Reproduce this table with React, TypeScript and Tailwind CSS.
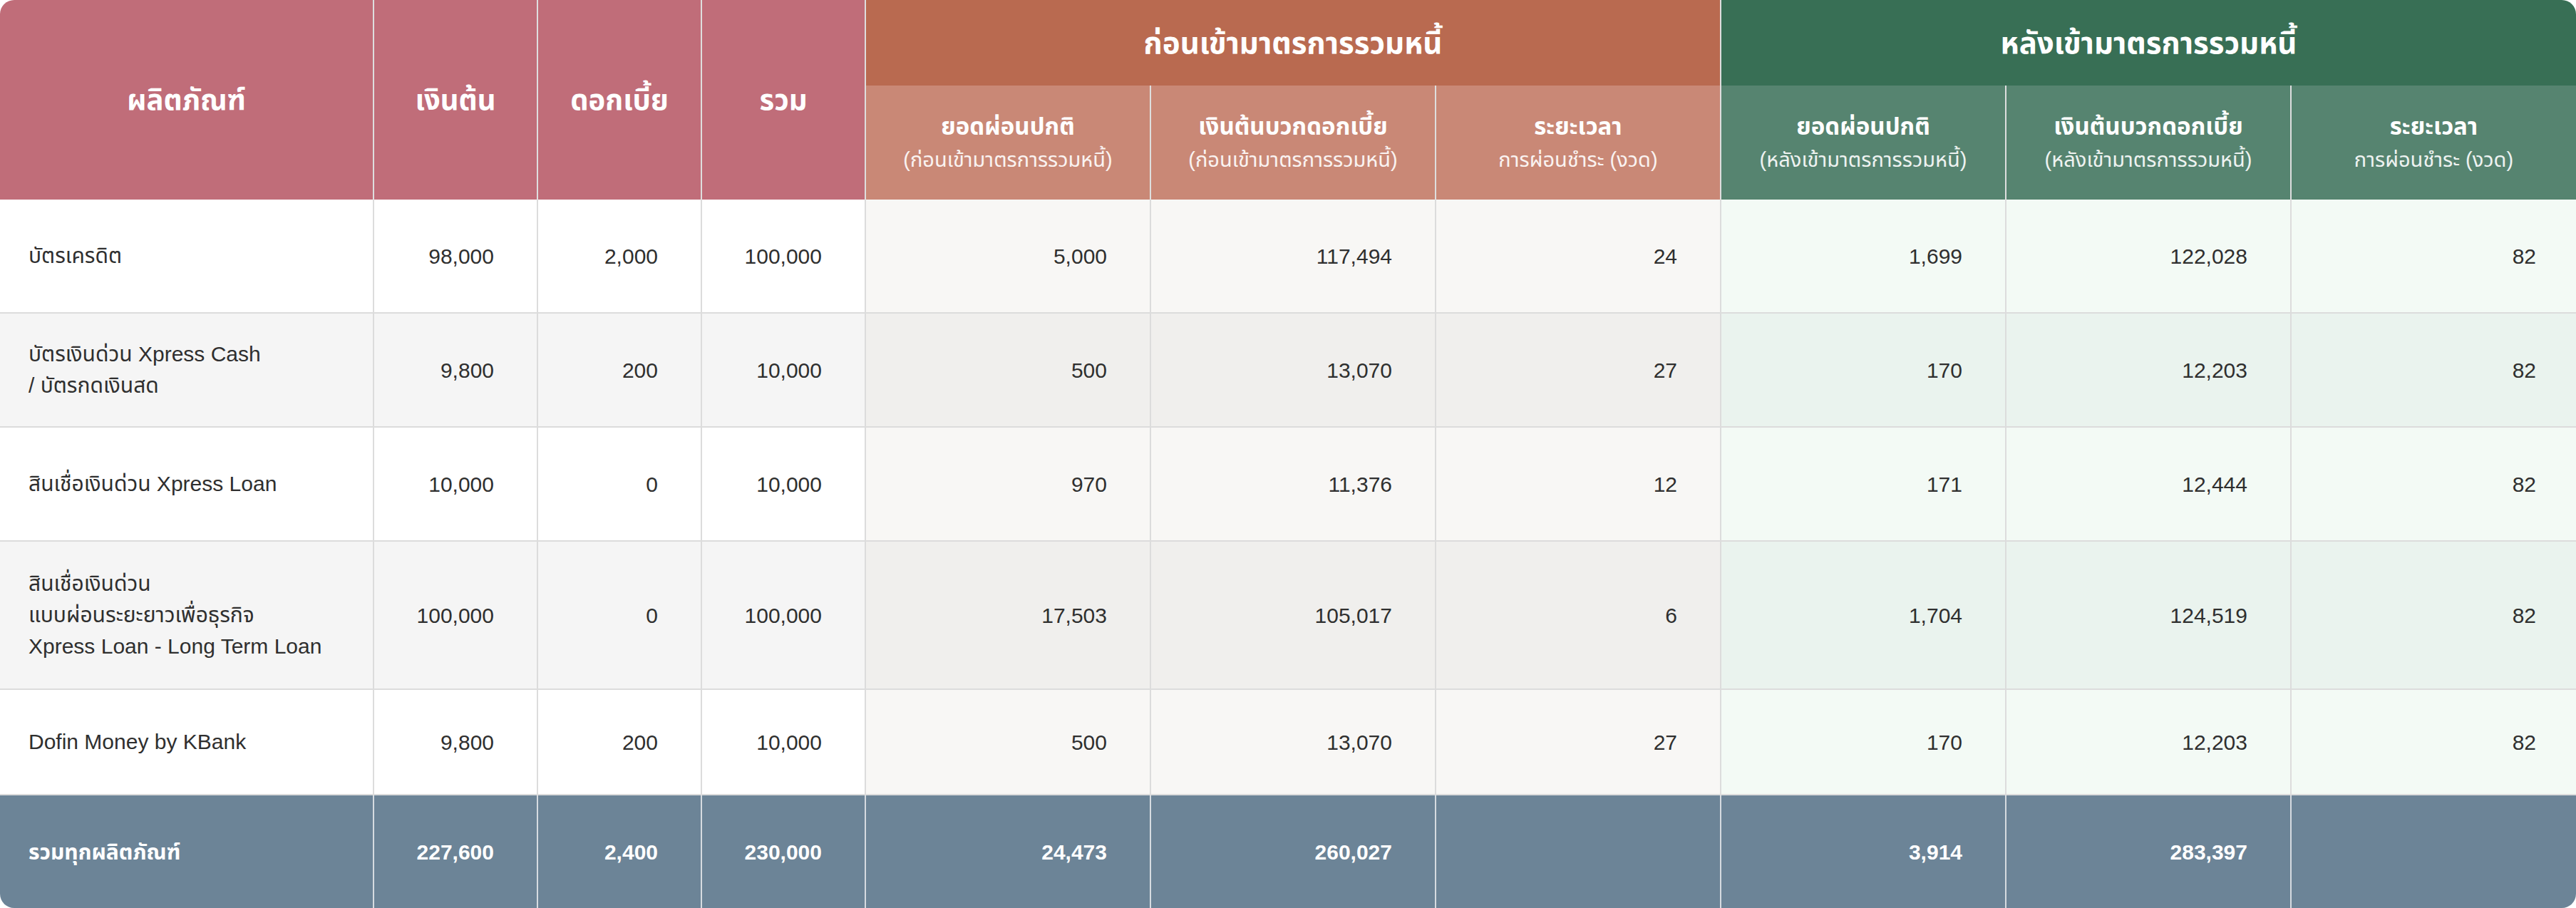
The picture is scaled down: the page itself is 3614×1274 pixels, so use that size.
import React from "react";

type Row = {
  name: string[];
  principal: string;
  interest: string;
  total: string;
  before: string[];
  after: string[];
  height: string;
};

const ROWS: Row[] = [
  {
    name: ["บัตรเครดิต"],
    principal: "98,000",
    interest: "2,000",
    total: "100,000",
    before: ["5,000", "117,494", "24"],
    after: ["1,699", "122,028", "82"],
    height: "h-[160px]",
  },
  {
    name: ["บัตรเงินด่วน Xpress Cash", "/ บัตรกดเงินสด"],
    principal: "9,800",
    interest: "200",
    total: "10,000",
    before: ["500", "13,070", "27"],
    after: ["170", "12,203", "82"],
    height: "h-[160px]",
  },
  {
    name: ["สินเชื่อเงินด่วน Xpress Loan"],
    principal: "10,000",
    interest: "0",
    total: "10,000",
    before: ["970", "11,376", "12"],
    after: ["171", "12,444", "82"],
    height: "h-[160px]",
  },
  {
    name: ["สินเชื่อเงินด่วน", "แบบผ่อนระยะยาวเพื่อธุรกิจ", "Xpress Loan - Long Term Loan"],
    principal: "100,000",
    interest: "0",
    total: "100,000",
    before: ["17,503", "105,017", "6"],
    after: ["1,704", "124,519", "82"],
    height: "h-[208px]",
  },
  {
    name: ["Dofin Money by KBank"],
    principal: "9,800",
    interest: "200",
    total: "10,000",
    before: ["500", "13,070", "27"],
    after: ["170", "12,203", "82"],
    height: "h-[148px]",
  },
];

const FONT = "font-['Liberation_Sans','Noto_Sans_Thai','Noto_Sans',sans-serif]";

// เซลล์ตัวเลขชิดขวา
const NumCell = ({ value, className }: { value: string; className: string }) => (
  <div className={`flex items-center justify-end pr-[60px] ${className}`}>{value}</div>
);

function SubHeader({ title, line2, className }: { title: string; line2: string; className: string }) {
  return (
    <div className={`flex flex-col items-center justify-center text-white ${className}`}>
      <div className="text-[33px] font-bold leading-[48px]">{title}</div>
      <div className="text-[29px] leading-[44px] text-white/90">{line2}</div>
    </div>
  );
}

export default function App() {
  return (
    <div className={`w-[3614px] h-[1274px] bg-white ${FONT}`}>
      <div className="w-full h-full rounded-[20px] overflow-hidden flex flex-col">
        {/* ── header ── */}
        <div className="flex h-[280px]">
          <div className="w-[525px] border-r-2 border-[#dedede] bg-[#c06d79] flex items-center justify-center text-white text-[40px] font-bold">
            ผลิตภัณฑ์
          </div>
          <div className="w-[230px] border-r-2 border-[#dedede] bg-[#c06d79] flex items-center justify-center text-white text-[40px] font-bold">
            เงินต้น
          </div>
          <div className="w-[230px] border-r-2 border-[#dedede] bg-[#c06d79] flex items-center justify-center text-white text-[40px] font-bold">
            ดอกเบี้ย
          </div>
          <div className="w-[230px] border-r-2 border-[#dedede] bg-[#c06d79] flex items-center justify-center text-white text-[40px] font-bold">
            รวม
          </div>

          {/* ก่อน */}
          <div className="w-[1200px] border-r-2 border-[#dedede] flex flex-col">
            <div className="h-[120px] bg-[#b96a50] flex items-center justify-center text-white text-[42px] font-bold">
              ก่อนเข้ามาตรการรวมหนี้
            </div>
            <div className="flex flex-1 bg-[#c98876]">
              <SubHeader title="ยอดผ่อนปกติ" line2="(ก่อนเข้ามาตรการรวมหนี้)" className="w-[400px] border-r-2 border-[#dedede]" />
              <SubHeader title="เงินต้นบวกดอกเบี้ย" line2="(ก่อนเข้ามาตรการรวมหนี้)" className="w-[400px] border-r-2 border-[#dedede]" />
              <SubHeader title="ระยะเวลา" line2="การผ่อนชำระ (งวด)" className="flex-1" />
            </div>
          </div>

          {/* หลัง */}
          <div className="flex-1 flex flex-col">
            <div className="h-[120px] bg-[#386f55] flex items-center justify-center text-white text-[42px] font-bold">
              หลังเข้ามาตรการรวมหนี้
            </div>
            <div className="flex flex-1 bg-[#568470]">
              <SubHeader title="ยอดผ่อนปกติ" line2="(หลังเข้ามาตรการรวมหนี้)" className="w-[400px] border-r-2 border-[#dedede]" />
              <SubHeader title="เงินต้นบวกดอกเบี้ย" line2="(หลังเข้ามาตรการรวมหนี้)" className="w-[400px] border-r-2 border-[#dedede]" />
              <SubHeader title="ระยะเวลา" line2="การผ่อนชำระ (งวด)" className="flex-1" />
            </div>
          </div>
        </div>

        {/* ── body ── */}
        {ROWS.map((row, idx) => {
          const even = idx % 2 === 1;
          const base = even ? "bg-[#f5f5f5]" : "bg-white";
          const mid = even ? "bg-[#f0efed]" : "bg-[#f8f7f5]";
          const right = even ? "bg-[#eaf3ee]" : "bg-[#f3faf5]";
          const cell = "border-r-2 border-[#dcdcdc]";
          return (
            <div
              key={idx}
              className={`flex ${row.height} border-b-2 border-[#dcdcdc] text-[30px] text-[#2f2f2f]`}
            >
              <div className={`w-[525px] ${cell} ${base} flex flex-col justify-center pl-[40px] leading-[44px]`}>
                {row.name.map((n, i) => (
                  <div key={i}>{n}</div>
                ))}
              </div>
              <NumCell value={row.principal} className={`w-[230px] ${cell} ${base}`} />
              <NumCell value={row.interest} className={`w-[230px] ${cell} ${base}`} />
              <NumCell value={row.total} className={`w-[230px] ${cell} ${base}`} />
              <NumCell value={row.before[0]} className={`w-[400px] ${cell} ${mid}`} />
              <NumCell value={row.before[1]} className={`w-[400px] ${cell} ${mid}`} />
              <NumCell value={row.before[2]} className={`w-[400px] ${cell} ${mid}`} />
              <NumCell value={row.after[0]} className={`w-[400px] ${cell} ${right}`} />
              <NumCell value={row.after[1]} className={`w-[400px] ${cell} ${right}`} />
              <div className={`flex-1 flex items-center justify-end pr-[56px] ${right}`}>{row.after[2]}</div>
            </div>
          );
        })}

        {/* ── footer ── */}
        <div className="flex flex-1 bg-[#6c8497] text-white text-[30px] font-bold">
          <div className="w-[525px] border-r-2 border-[#d6dbe0] flex items-center pl-[40px]">รวมทุกผลิตภัณฑ์</div>
          <NumCell value="227,600" className="w-[230px] border-r-2 border-[#d6dbe0]" />
          <NumCell value="2,400" className="w-[230px] border-r-2 border-[#d6dbe0]" />
          <NumCell value="230,000" className="w-[230px] border-r-2 border-[#d6dbe0]" />
          <NumCell value="24,473" className="w-[400px] border-r-2 border-[#d6dbe0]" />
          <NumCell value="260,027" className="w-[400px] border-r-2 border-[#d6dbe0]" />
          <NumCell value="" className="w-[400px] border-r-2 border-[#d6dbe0]" />
          <NumCell value="3,914" className="w-[400px] border-r-2 border-[#d6dbe0]" />
          <NumCell value="283,397" className="w-[400px] border-r-2 border-[#d6dbe0]" />
          <div className="flex-1" />
        </div>
      </div>
    </div>
  );
}
